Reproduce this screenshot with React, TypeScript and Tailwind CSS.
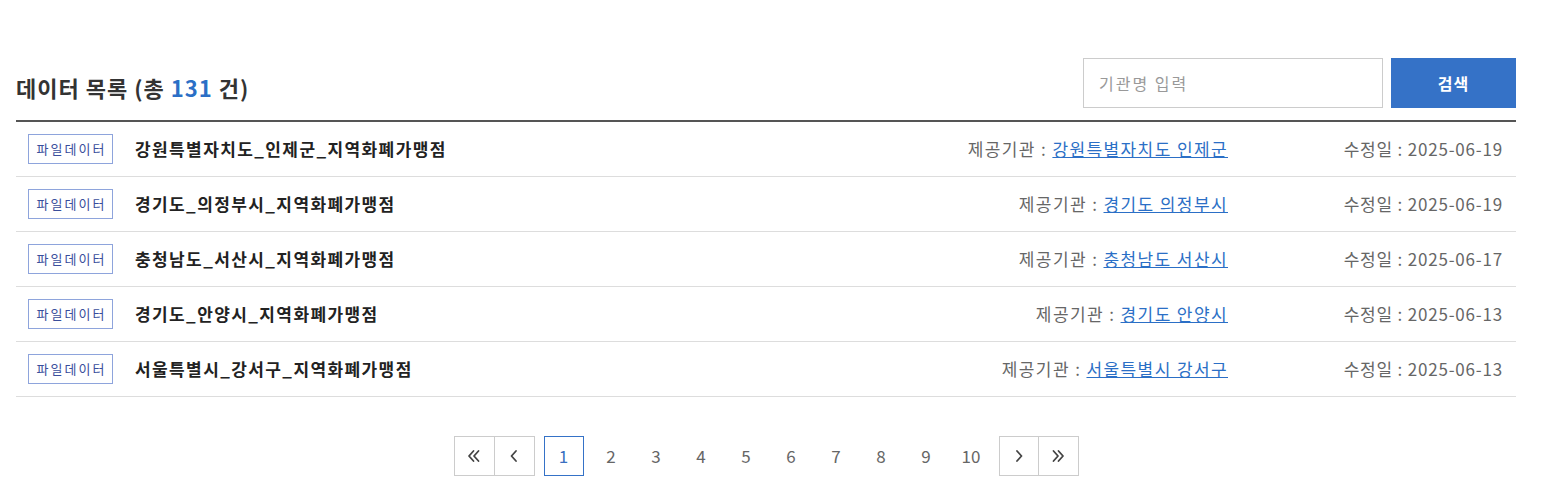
import React from 'react';

const rows = [
	{ title: '강원특별자치도_인제군_지역화폐가맹점', org: '강원특별자치도 인제군', date: '2025-06-19' },
	{ title: '경기도_의정부시_지역화폐가맹점', org: '경기도 의정부시', date: '2025-06-19' },
	{ title: '충청남도_서산시_지역화폐가맹점', org: '충청남도 서산시', date: '2025-06-17' },
	{ title: '경기도_안양시_지역화폐가맹점', org: '경기도 안양시', date: '2025-06-13' },
	{ title: '서울특별시_강서구_지역화폐가맹점', org: '서울특별시 강서구', date: '2025-06-13' },
];

const Chev = ({ dir, double }: { dir: 'l' | 'r'; double?: boolean }) => (
	<svg width="16" height="16" viewBox="0 0 16 16" fill="none" stroke="#444" strokeWidth="1.8" strokeLinecap="round" strokeLinejoin="round">
		{dir === 'l' ? (
			double ? (
				<>
					<path d="M7.5 3L3 8l4.5 5" />
					<path d="M12.5 3L8 8l4.5 5" />
				</>
			) : (
				<path d="M10 3L5.5 8l4.5 5" />
			)
		) : double ? (
			<>
				<path d="M3.5 3L8 8l-4.5 5" />
				<path d="M8.5 3L13 8l-4.5 5" />
			</>
		) : (
			<path d="M6 3l4.5 5L6 13" />
		)}
	</svg>
);

export default function App() {
	return (
		<div className="min-h-screen bg-white pt-[58px] text-[#333]" style={{ fontFamily: '"Noto Sans CJK KR", "Noto Sans", sans-serif' }}>
			<div className="ml-4 w-[1500px]">
				{/* Header */}
				<div className="flex items-end justify-between pb-[12px] border-b-2 border-[#555]">
					<h2 className="text-[22px] font-bold leading-none pb-[10px] tracking-[1px]">
						데이터 목록 (총 <span className="text-[#2b6fc6]">131</span> 건)
					</h2>
					<div className="flex">
						<input
							className="w-[300px] h-[50px] border border-[#ccc] px-[15px] text-[16px] tracking-[2px] outline-none placeholder:text-[#999]"
							placeholder="기관명 입력"
						/>
						<button className="ml-2 w-[125px] h-[50px] bg-[#3572c7] text-white text-[16px] tracking-[1px] font-bold">검색</button>
					</div>
				</div>

				{/* List */}
				<ul>
					{rows.map((r, i) => (
						<li key={i} className="flex items-center h-[55px] border-b border-[#ddd] pl-3">
							<span className="inline-flex items-center justify-center w-[85px] h-[30px] border border-[#8ea4dc] text-[13px] tracking-[2px] pl-[2px] text-[#3a4e9c]">파일데이터</span>
							<span className="ml-[22px] text-[17px] tracking-[1.4px] font-bold text-[#222]">{r.title}</span>
							<span className="ml-auto text-[17px] tracking-[1.4px] text-[#666]">
								제공기관 : <a href="#" className="text-[#2b6fc6] underline">{r.org}</a>
							</span>
							<span className="w-[288px] pr-[13px] text-right text-[17px] tracking-[0.8px] text-[#666]">수정일 : {r.date}</span>
						</li>
					))}
				</ul>

				{/* Pagination */}
				<div className="flex justify-center mt-[39px]">
					<div className="flex items-center">
						<button className="w-[41px] h-[40px] border border-[#ccc] flex items-center justify-center"><Chev dir="l" double /></button>
						<button className="w-[40px] h-[40px] border border-l-0 border-[#ccc] flex items-center justify-center"><Chev dir="l" /></button>
						<div className="flex ml-[9px] mr-[5px]">
							{[1, 2, 3, 4, 5, 6, 7, 8, 9, 10].map((n) => (
								<button
									key={n}
									className={
										n === 1
											? 'w-[40px] h-[40px] mr-[5px] border border-[#3572c7] text-[#3a6fc0] text-[17px]'
											: 'w-[45px] h-[40px] text-[#666] text-[17px]'
									}
								>
									{n}
								</button>
							))}
						</div>
						<button className="w-[40px] h-[40px] border border-[#ccc] flex items-center justify-center"><Chev dir="r" /></button>
						<button className="w-[40px] h-[40px] border border-l-0 border-[#ccc] flex items-center justify-center"><Chev dir="r" double /></button>
					</div>
				</div>
			</div>
		</div>
	);
}
